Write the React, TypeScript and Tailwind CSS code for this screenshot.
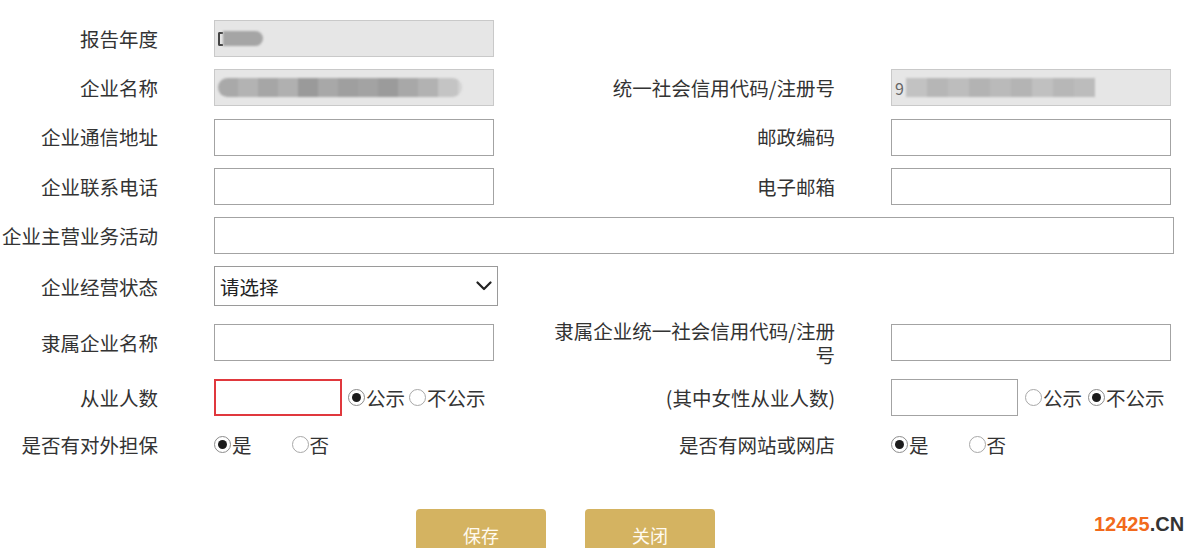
import React from "react";

const FONT = { fontFamily: '"Noto Sans CJK SC", "Noto Sans", sans-serif' };

function Radio({ checked }: { checked?: boolean }) {
  return checked ? (
    <span className="w-[17px] h-[17px] rounded-full border border-[#8c8c8c] bg-white flex items-center justify-center shrink-0">
      <span className="w-[9px] h-[9px] rounded-full bg-[#1c1c1c]" />
    </span>
  ) : (
    <span className="w-[17px] h-[17px] rounded-full border border-[#a8a8a8] bg-white shrink-0" />
  );
}

function RadioOpt({ checked, label }: { checked?: boolean; label: string }) {
  return (
    <span className="flex items-center gap-[1px]">
      <Radio checked={checked} />
      <span>{label}</span>
    </span>
  );
}

function Label({ children, w }: { children: React.ReactNode; w: string }) {
  return <div className={`${w} shrink-0 text-right whitespace-nowrap`}>{children}</div>;
}

function Input({ w = "w-[280px]", red }: { w?: string; red?: boolean }) {
  if (red) {
    return <div className={`${w} h-[37px] bg-white border-2 border-[#e0383d] shrink-0`} />;
  }
  return <div className={`${w} h-[37px] bg-white border border-[#a3a3a3] shrink-0`} />;
}

function Disabled({ children }: { children?: React.ReactNode }) {
  return (
    <div className="w-[280px] h-[37px] bg-[#e6e6e6] border border-[#c9c9c9] shrink-0 flex items-center pl-[3px]">
      {children}
    </div>
  );
}

const LeftLabel = "w-[158px]";
const RightLabel = "w-[285px]";

export default function App() {
  const segsL = ["#a9a9a9", "#b3b3b3", "#a6a6a6", "#b0b0b0", "#9a9a9a", "#a8a8a8", "#9f9f9f", "#a3a3a3", "#9b9b9b", "#a8a8a8", "#b2b2b2", "#c4c4c4"];
  const segsR = ["#c2c2c2", "#b6b6b6", "#bdbdbd", "#b3b3b3", "#bababa", "#b4b4b4", "#c0c0c0", "#b7b7b7", "#bcbcbc"];
  return (
    <div className="relative w-[1200px] h-[548px] overflow-hidden bg-white text-[#333] text-[19.5px]" style={FONT}>
      <div className="flex flex-col gap-[12.25px] pt-[20px]">
        {/* Row 1 */}
        <div className="flex items-center h-[37px]">
          <Label w={LeftLabel}>报告年度</Label>
          <div className="ml-[56px]">
            <Disabled>
              <div className="flex items-center h-[16px]">
                <span className="w-[5px] h-[14px] border-l-2 border-y-2 border-[#444] rounded-l-[2px]" />
                <span className="w-[40px] h-[15px] rounded-r-full bg-[#a5a5a5] blur-[1px]" />
              </div>
            </Disabled>
          </div>
        </div>
        {/* Row 2 */}
        <div className="flex items-center h-[37px]">
          <Label w={LeftLabel}>企业名称</Label>
          <div className="ml-[56px] w-[336px]">
            <Disabled>
              <div className="flex items-center h-[19px] rounded-l-full rounded-r-full overflow-hidden blur-[0.8px]">
                {segsL.map((c, i) => (
                  <span key={i} className="w-[20px] h-[19px]" style={{ backgroundColor: c }} />
                ))}
                <span className="w-[4px] h-[19px] bg-[#d2d2d2]" />
              </div>
            </Disabled>
          </div>
          <Label w={RightLabel}>统一社会信用代码/注册号</Label>
          <div className="ml-[56px]">
            <Disabled>
              <span className="text-[#666] text-[16px] leading-none mr-[2px]">9</span>
              <div className="flex items-center h-[19px] blur-[0.8px]">
                {segsR.map((c, i) => (
                  <span key={i} className="w-[21px] h-[19px]" style={{ backgroundColor: c }} />
                ))}
              </div>
            </Disabled>
          </div>
        </div>
        {/* Row 3 */}
        <div className="flex items-center h-[37px]">
          <Label w={LeftLabel}>企业通信地址</Label>
          <div className="ml-[56px] w-[336px]">
            <Input />
          </div>
          <Label w={RightLabel}>邮政编码</Label>
          <div className="ml-[56px]">
            <Input />
          </div>
        </div>
        {/* Row 4 */}
        <div className="flex items-center h-[37px]">
          <Label w={LeftLabel}>企业联系电话</Label>
          <div className="ml-[56px] w-[336px]">
            <Input />
          </div>
          <Label w={RightLabel}>电子邮箱</Label>
          <div className="ml-[56px]">
            <Input />
          </div>
        </div>
        {/* Row 5 */}
        <div className="flex items-center h-[37px]">
          <Label w={LeftLabel}>企业主营业务活动</Label>
          <div className="ml-[56px]">
            <Input w="w-[960px]" />
          </div>
        </div>
        {/* Row 6 */}
        <div className="flex items-center h-[40px]">
          <Label w={LeftLabel}>企业经营状态</Label>
          <div className="ml-[56px] w-[284px] h-[40px] border border-[#9a9a9a] bg-white flex items-center justify-between pl-[5px] pr-[5px] text-[#222]">
            <span>请选择</span>
            <svg width="16" height="10" viewBox="0 0 16 10" fill="none">
              <path d="M1.5 1.5 L8 8 L14.5 1.5" stroke="#222" strokeWidth="2.2" strokeLinecap="round" strokeLinejoin="round" />
            </svg>
          </div>
        </div>
        {/* Row 7 */}
        <div className="flex items-center h-[48px]">
          <Label w={LeftLabel}>隶属企业名称</Label>
          <div className="ml-[56px] w-[336px]">
            <Input />
          </div>
          <div className={`${RightLabel} shrink-0 text-right whitespace-nowrap flex flex-col`}>
            <div className="h-[24px] leading-[24px]">隶属企业统一社会信用代码/注册</div>
            <div className="h-[24px] leading-[24px]">号</div>
          </div>
          <div className="ml-[56px]">
            <Input />
          </div>
        </div>
        {/* Row 8 */}
        <div className="flex items-center h-[37px]">
          <Label w={LeftLabel}>从业人数</Label>
          <div className="ml-[56px] w-[336px] flex items-center">
            <Input w="w-[128px]" red />
            <div className="ml-[6px] flex items-center gap-[4px]">
              <RadioOpt checked label="公示" />
              <RadioOpt label="不公示" />
            </div>
          </div>
          <Label w={RightLabel}>(其中女性从业人数)</Label>
          <div className="ml-[56px] flex items-center">
            <Input w="w-[127px]" />
            <div className="ml-[7px] flex items-center gap-[6px]">
              <RadioOpt label="公示" />
              <RadioOpt checked label="不公示" />
            </div>
          </div>
        </div>
        {/* Row 9 */}
        <div className="flex items-center h-[33px]">
          <Label w={LeftLabel}>是否有对外担保</Label>
          <div className="ml-[56px] w-[336px] flex items-center gap-[40px]">
            <RadioOpt checked label="是" />
            <RadioOpt label="否" />
          </div>
          <Label w={RightLabel}>是否有网站或网店</Label>
          <div className="ml-[56px] flex items-center gap-[40px]">
            <RadioOpt checked label="是" />
            <RadioOpt label="否" />
          </div>
        </div>
      </div>
      {/* Buttons */}
      <div className="flex justify-start gap-[39px] pl-[416px] mt-[48px]">
        <button className="w-[130px] h-[52px] rounded-[4px] bg-[#d4b361] text-[#fffaf0] text-[18px]" style={FONT}>
          保存
        </button>
        <button className="w-[130px] h-[52px] rounded-[4px] bg-[#d4b361] text-[#fffaf0] text-[18px]" style={FONT}>
          关闭
        </button>
      </div>
      {/* Watermark */}
      <div
        className="absolute left-[1094px] top-[512px] text-[20px] font-bold leading-[24px]"
        style={{ fontFamily: '"Liberation Sans", Arial, sans-serif' }}
      >
        <span className="text-[#f26a1c]">12425</span>
        <span className="text-[#333]">.CN</span>
      </div>
    </div>
  );
}
